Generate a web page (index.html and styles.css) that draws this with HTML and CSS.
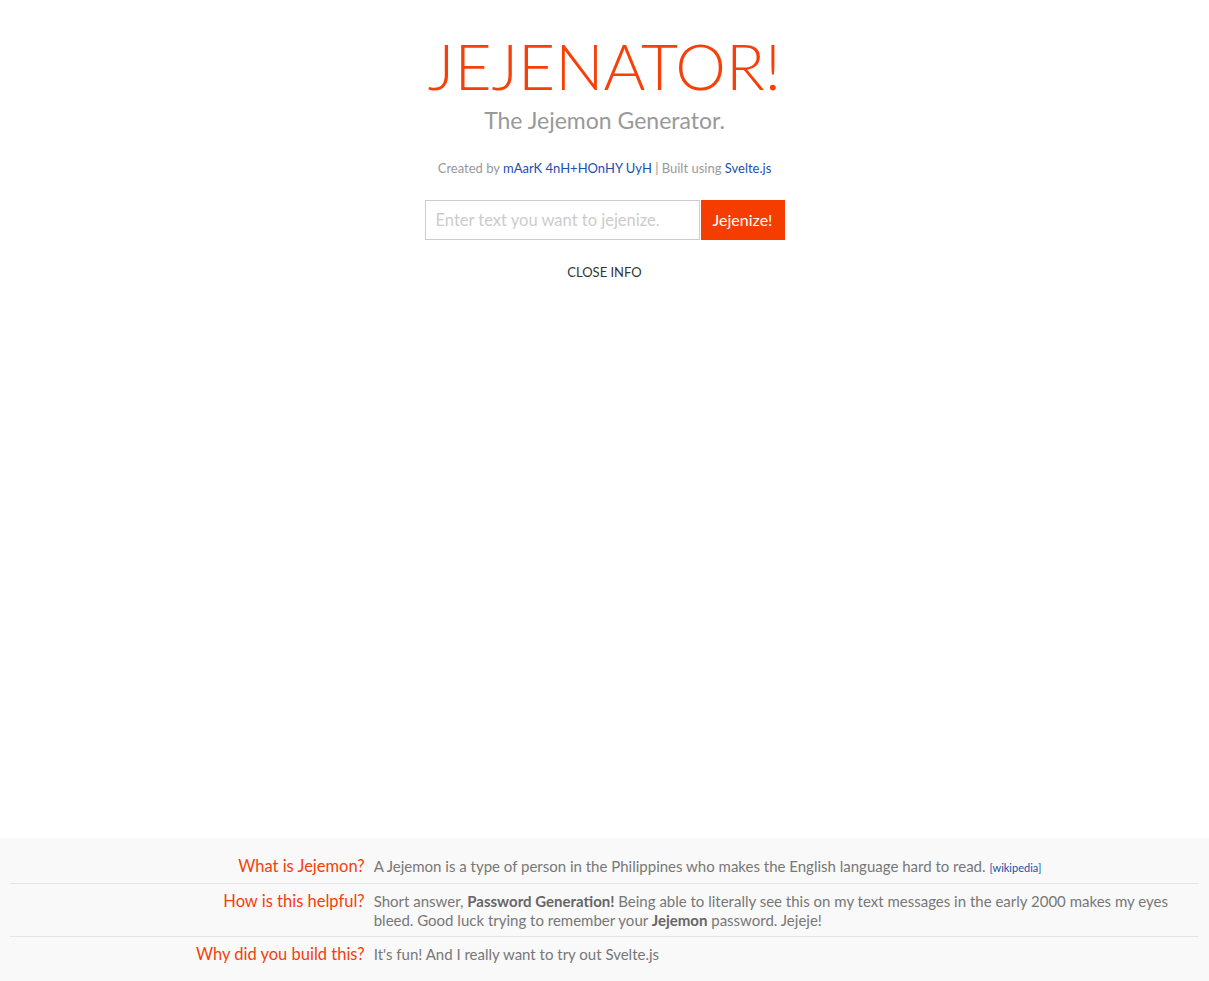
FILE: index.html
```html
<!DOCTYPE html>
<html>
<head>
<meta charset="utf-8">
<title>Jejenator!</title>
<link rel="stylesheet" href="styles.css">
</head>
<body>
<div class="page">
  <main class="main">
    <h1 class="title">JEJENATOR!</h1>
    <p class="subtitle">The Jejemon Generator.</p>
    <p class="credits">Created by <a href="#">mAarK 4nH+HOnHY UyH</a> | Built using <a href="#">Svelte.js</a></p>
    <form class="form">
      <input class="input" type="text" placeholder="Enter text you want to jejenize.">
      <button class="btn" type="button">Jejenize!</button>
    </form>
    <a class="toggle" href="#">CLOSE INFO</a>
  </main>
  <footer class="info">
    <table class="faq">
      <tr>
        <th>What is Jejemon?</th>
        <td>A Jejemon is a type of person in the Philippines who makes the English language hard to read. <a class="wiki" href="#">[wikipedia]</a></td>
      </tr>
      <tr>
        <th>How is this helpful?</th>
        <td>Short answer, <b>Password Generation!</b> Being able to literally see this on my text messages in the early 2000 makes my eyes bleed. Good luck trying to remember your <b>Jejemon</b> password. Jejeje!</td>
      </tr>
      <tr>
        <th>Why did you build this?</th>
        <td>It's fun! And I really want to try out Svelte.js</td>
      </tr>
    </table>
  </footer>
</div>
</body>
</html>
```

FILE: styles.css
```css
* { box-sizing: border-box; }
html, body { margin: 0; padding: 0; }
body {
  font-family: "Lato", "Noto Sans", sans-serif;
  color: #333;
  background: #fff;
}
.page {
  min-height: 100vh;
  display: flex;
  flex-direction: column;
}
.main {
  display: flex;
  flex-direction: column;
  align-items: center;
  padding-top: 26px;
}
.title {
  margin: 0;
  font-weight: 300;
  font-size: 64px;
  line-height: 80px;
  color: #f5400a;
}
.subtitle {
  margin: 2px 0 0;
  font-size: 23px;
  line-height: 24px;
  color: #999;
  font-weight: 400;
}
.credits {
  margin: 28px 0 0;
  font-size: 13px;
  line-height: 16px;
  color: #999;
}
.credits a { color: #1a4fb0; text-decoration: none; }
.form {
  display: flex;
  gap: 1px;
  margin-top: 24px;
}
.input {
  width: 275px;
  height: 40px;
  border: 1px solid #ccc;
  padding: 0 10px;
  font-family: inherit;
  font-size: 16.5px;
  color: #333;
  outline: none;
}
.input::placeholder { color: #ccc; }
.btn {
  height: 40px;
  width: 84px;
  border: 0;
  background: #f53d00;
  color: #fff;
  font-family: inherit;
  font-size: 16px;
  padding: 0 0 2px;
}
.toggle {
  margin-top: 24px;
  font-size: 13px;
  color: #333;
  text-decoration: none;
}
.info {
  margin-top: auto;
  background: #f9f9f9;
  padding: 11px 10px;
}
.faq {
  width: 100%;
  border-collapse: collapse;
}
.faq tr + tr { border-top: 1px solid #e5e5e5; }
.faq th {
  width: 30%;
  text-align: right;
  vertical-align: top;
  font-weight: 400;
  font-size: 16.5px;
  line-height: 20px;
  color: #f5400a;
  padding: 7px 2px 6px 0;
  white-space: nowrap;
}
.faq td {
  vertical-align: top;
  font-size: 15px;
  line-height: 19px;
  color: #777;
  padding: 8px 0 6px 7px;
}
.faq td b { color: #666; }
.wiki { font-size: 11px; color: #1a4fb0; text-decoration: none; }
```
